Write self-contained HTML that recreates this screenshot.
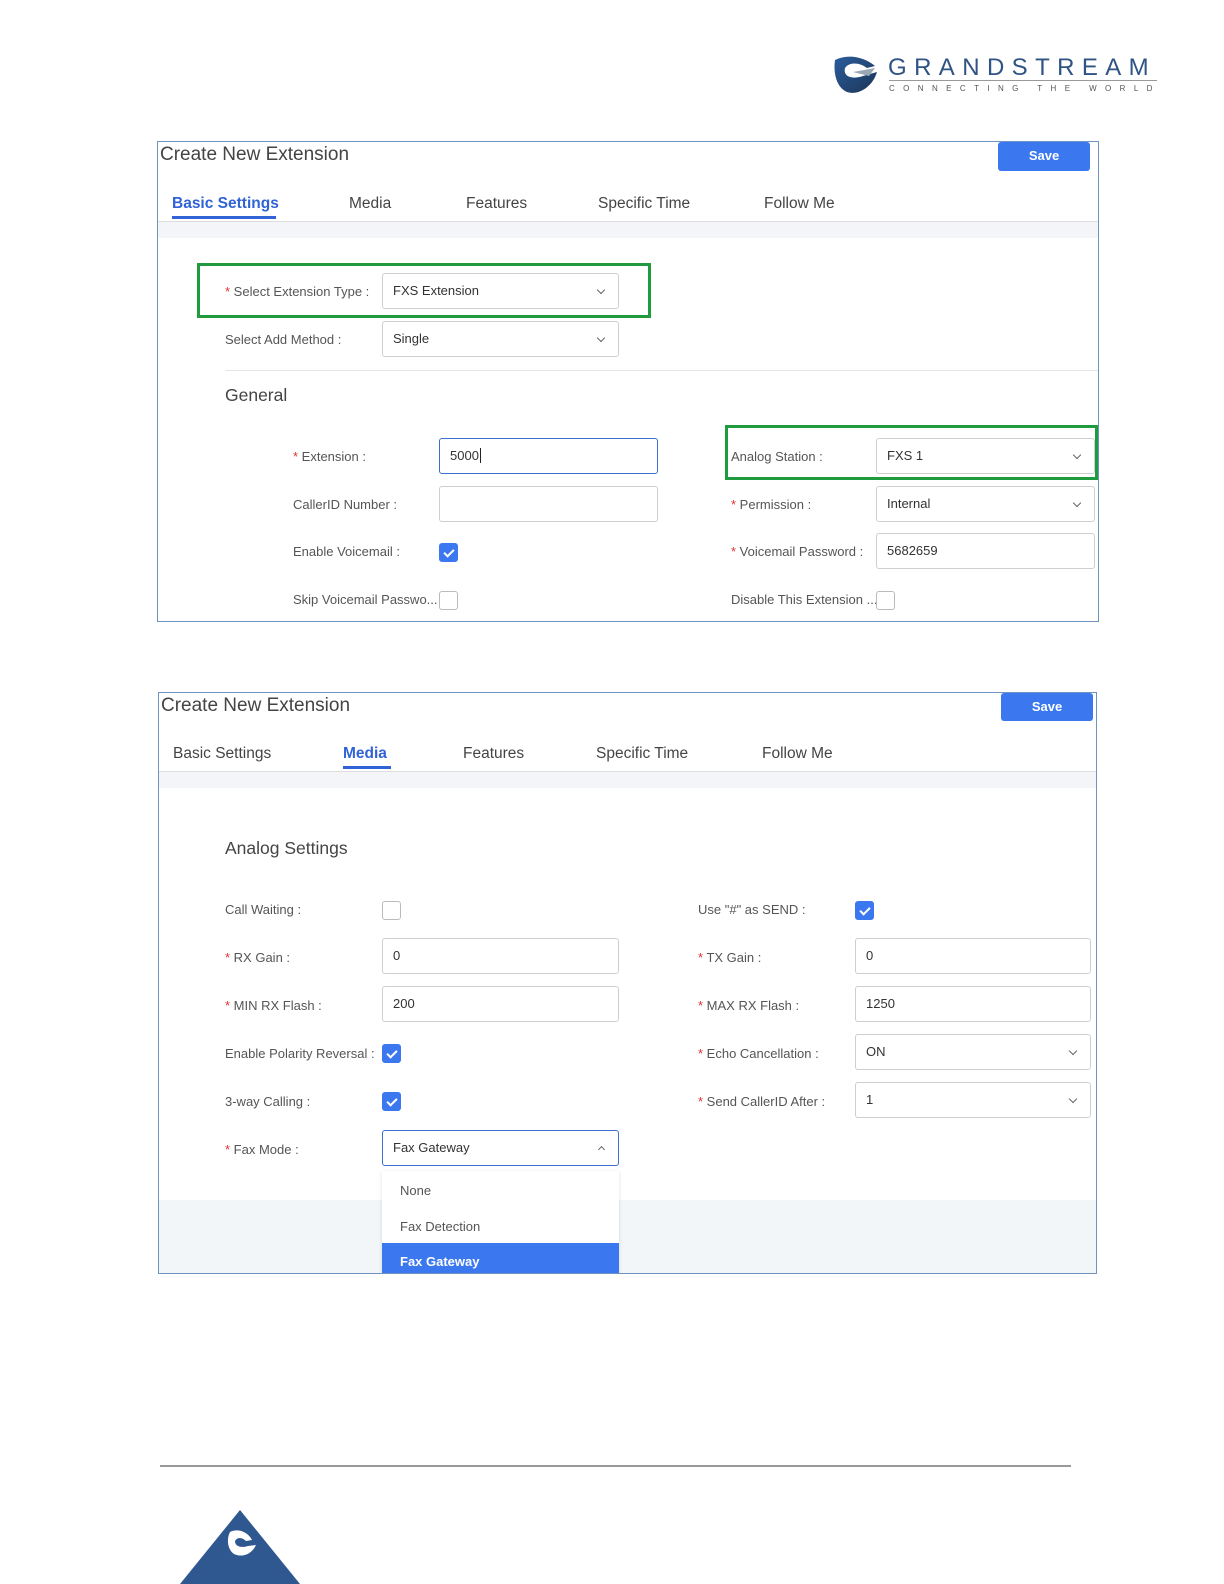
<!DOCTYPE html>
<html><head><meta charset="utf-8"><style>
*{box-sizing:border-box;margin:0;padding:0}
body{width:1224px;height:1584px;background:#fff;position:relative;font-family:"Liberation Sans",sans-serif;overflow:hidden}
.a{position:absolute}
.panel{position:absolute;border:1.5px solid #6f93c0;background:#fff;overflow:hidden}
.title{position:absolute;left:2px;top:2px;font-size:19px;color:#444}
.save{position:absolute;background:#3b78f0;color:#fff;font-size:13px;font-weight:bold;text-align:center;line-height:28px;border-radius:3px}
.tab{position:absolute;font-size:15.5px;color:#444}
.tab.on{color:#2f63d6;font-weight:bold}
.lbl{position:absolute;font-size:13px;color:#555;line-height:16px;white-space:nowrap}
.req{color:#d33}
.inp{position:absolute;height:36px;border:1px solid #cfcfcf;border-radius:3px;font-size:13px;color:#333;padding-left:10px;line-height:34px;background:#fff}
.inp.sel::after{content:"";position:absolute;right:14px;top:13px;width:5px;height:5px;border-right:1.2px solid #666;border-bottom:1.2px solid #666;transform:rotate(45deg)}
.cb{position:absolute;width:19px;height:19px;border:1px solid #bbb;border-radius:3px;background:#fff}
.cb.on{background:#3b78f0;border-color:#3b78f0}
.cb.on::after{content:"";position:absolute;left:6px;top:3px;width:4px;height:8px;border-right:2px solid #fff;border-bottom:2px solid #fff;transform:rotate(45deg)}
.green{position:absolute;border:3px solid #1f9a3c}
</style></head><body>

<!-- logo -->
<svg class="a" style="left:833px;top:54px" width="48" height="42" viewBox="0 0 48 42">
<defs><linearGradient id="g" x1="0" y1="0" x2="1" y2="1"><stop offset="0" stop-color="#2a5d9c"/><stop offset="1" stop-color="#1c3556"/></linearGradient></defs>
<path d="M2 6 C14 0 30 2 42 12 L34 14 C26 8 16 8 12 14 C10 22 18 26 30 22 L44 18 C40 32 26 42 14 38 C4 34 0 20 2 6Z" fill="url(#g)"/>
<path d="M20 18 L42 14 L36 22 Z" fill="#9aa7b5"/>
</svg>
<div class="a" style="left:888px;top:54px;font-size:24px;letter-spacing:7.4px;color:#2f5384;white-space:nowrap">GRANDSTREAM</div>
<div class="a" style="left:889px;top:80px;width:268px;border-top:1px solid #999"></div>
<div class="a" style="left:889px;top:84px;font-size:8px;letter-spacing:8.4px;color:#555;white-space:nowrap">CONNECTING THE WORLD</div>

<!-- Panel 1 -->
<div class="panel" style="left:157px;top:141px;width:942px;height:481px">
  <div class="title">Create New Extension</div>
  <div class="save" style="left:840px;top:0;width:92px;height:29px">Save</div>
  <div class="tab on" style="left:14px;top:53px">Basic Settings</div>
  <div class="a" style="left:14px;top:74px;width:104px;height:3px;background:#2f63d6"></div>
  <div class="tab" style="left:191px;top:53px">Media</div>
  <div class="tab" style="left:308px;top:53px">Features</div>
  <div class="tab" style="left:440px;top:53px">Specific Time</div>
  <div class="tab" style="left:606px;top:53px">Follow Me</div>
  <div class="a" style="left:0;top:79px;width:942px;height:1px;background:#ddd"></div>
  <div class="a" style="left:0;top:80px;width:942px;height:16px;background:#f3f5f8"></div>

  <div class="green" style="left:39px;top:121px;width:454px;height:55px"></div>
  <div class="lbl" style="left:67px;top:142px"><span class="req">* </span>Select Extension Type :</div>
  <div class="inp sel" style="left:224px;top:131px;width:237px">FXS Extension</div>
  <div class="lbl" style="left:67px;top:190px">Select Add Method :</div>
  <div class="inp sel" style="left:224px;top:179px;width:237px">Single</div>
  <div class="a" style="left:67px;top:228px;width:875px;height:1px;background:#e4e4e4"></div>
  <div class="a" style="left:67px;top:243px;font-size:17.5px;color:#444">General</div>

  <div class="lbl" style="left:135px;top:307px"><span class="req">* </span>Extension :</div>
  <div class="inp" style="left:281px;top:296px;width:219px;border-color:#3b6fd0">5000<span style="border-left:1px solid #222;margin-left:1px"></span></div>
  <div class="lbl" style="left:135px;top:355px">CallerID Number :</div>
  <div class="inp" style="left:281px;top:344px;width:219px"></div>
  <div class="lbl" style="left:135px;top:402px">Enable Voicemail :</div>
  <div class="cb on" style="left:281px;top:401px"></div>
  <div class="lbl" style="left:135px;top:450px">Skip Voicemail Passwo...</div>
  <div class="cb" style="left:281px;top:449px"></div>

  <div class="green" style="left:567px;top:283px;width:373px;height:55px"></div>
  <div class="lbl" style="left:573px;top:307px">Analog Station :</div>
  <div class="inp sel" style="left:718px;top:296px;width:219px">FXS 1</div>
  <div class="lbl" style="left:573px;top:355px"><span class="req">* </span>Permission :</div>
  <div class="inp sel" style="left:718px;top:344px;width:219px">Internal</div>
  <div class="lbl" style="left:573px;top:402px"><span class="req">* </span>Voicemail Password :</div>
  <div class="inp" style="left:718px;top:391px;width:219px">5682659</div>
  <div class="lbl" style="left:573px;top:450px">Disable This Extension ...</div>
  <div class="cb" style="left:718px;top:449px"></div>
</div>

<!-- Panel 2 -->
<div class="panel" style="left:158px;top:692px;width:939px;height:582px">
  <div class="a" style="left:0;top:507px;width:939px;height:75px;background:#f3f6f9"></div>
  <div class="title">Create New Extension</div>
  <div class="save" style="left:842px;top:0;width:92px;height:28px">Save</div>
  <div class="tab" style="left:14px;top:52px">Basic Settings</div>
  <div class="tab on" style="left:184px;top:52px">Media</div>
  <div class="a" style="left:184px;top:73px;width:48px;height:3px;background:#2f63d6"></div>
  <div class="tab" style="left:304px;top:52px">Features</div>
  <div class="tab" style="left:437px;top:52px">Specific Time</div>
  <div class="tab" style="left:603px;top:52px">Follow Me</div>
  <div class="a" style="left:0;top:78px;width:939px;height:1px;background:#ddd"></div>
  <div class="a" style="left:0;top:79px;width:939px;height:16px;background:#f3f5f8"></div>

  <div class="a" style="left:66px;top:145px;font-size:17.5px;color:#444">Analog Settings</div>

  <div class="lbl" style="left:66px;top:209px">Call Waiting :</div>
  <div class="cb" style="left:223px;top:208px"></div>
  <div class="lbl" style="left:66px;top:257px"><span class="req">* </span>RX Gain :</div>
  <div class="inp" style="left:223px;top:245px;width:237px">0</div>
  <div class="lbl" style="left:66px;top:305px"><span class="req">* </span>MIN RX Flash :</div>
  <div class="inp" style="left:223px;top:293px;width:237px">200</div>
  <div class="lbl" style="left:66px;top:353px">Enable Polarity Reversal :</div>
  <div class="cb on" style="left:223px;top:351px"></div>
  <div class="lbl" style="left:66px;top:401px">3-way Calling :</div>
  <div class="cb on" style="left:223px;top:399px"></div>
  <div class="lbl" style="left:66px;top:449px"><span class="req">* </span>Fax Mode :</div>
  <div class="inp" style="left:223px;top:437px;width:237px;border-color:#3b6fd0">Fax Gateway<span class="a" style="right:14px;top:16px;width:5px;height:5px;border-left:1.2px solid #666;border-top:1.2px solid #666;transform:rotate(45deg)"></span></div>
  <div class="a" style="left:223px;top:478px;width:237px;height:110px;background:#fff;box-shadow:0 1px 4px rgba(0,0,0,.12)">
    <div class="a" style="left:18px;top:12px;font-size:13px;color:#555">None</div>
    <div class="a" style="left:18px;top:48px;font-size:13px;color:#555">Fax Detection</div>
    <div class="a" style="left:0;top:72px;width:237px;height:38px;background:#3b78f0"></div>
    <div class="a" style="left:18px;top:83px;font-size:13px;color:#fff;font-weight:bold">Fax Gateway</div>
  </div>

  <div class="lbl" style="left:539px;top:209px">Use "#" as SEND :</div>
  <div class="cb on" style="left:696px;top:208px"></div>
  <div class="lbl" style="left:539px;top:257px"><span class="req">* </span>TX Gain :</div>
  <div class="inp" style="left:696px;top:245px;width:236px">0</div>
  <div class="lbl" style="left:539px;top:305px"><span class="req">* </span>MAX RX Flash :</div>
  <div class="inp" style="left:696px;top:293px;width:236px">1250</div>
  <div class="lbl" style="left:539px;top:353px"><span class="req">* </span>Echo Cancellation :</div>
  <div class="inp sel" style="left:696px;top:341px;width:236px">ON</div>
  <div class="lbl" style="left:539px;top:401px"><span class="req">* </span>Send CallerID After :</div>
  <div class="inp sel" style="left:696px;top:389px;width:236px">1</div>
</div>

<!-- footer -->
<div class="a" style="left:160px;top:1465px;width:911px;height:2px;background:#999"></div>
<svg class="a" style="left:180px;top:1510px" width="120" height="74" viewBox="0 0 120 74">
<polygon points="60,0 120,74 0,74" fill="#2f5890"/>
<path d="M50 22 C58 18 68 22 72 30 L66 31 C62 27 57 27 55 31 C55 37 62 38 68 36 L76 35 C72 44 62 48 54 44 C48 40 46 30 50 22Z" fill="#fff"/>
</svg>
</body></html>
